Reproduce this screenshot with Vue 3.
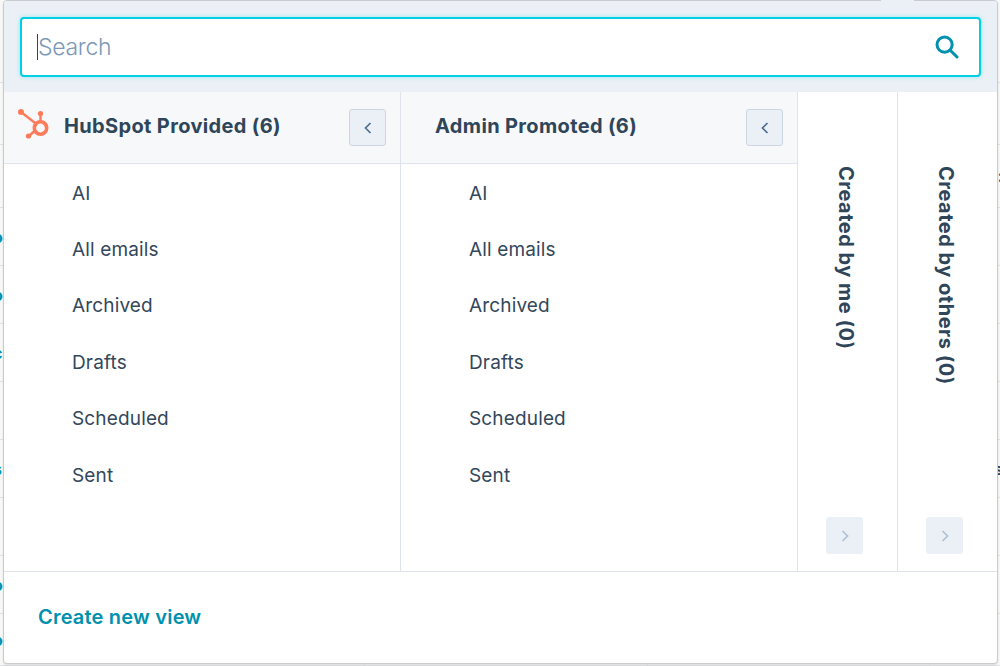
<script setup>
const items = ['AI', 'All emails', 'Archived', 'Drafts', 'Scheduled', 'Sent']
const openCols = [
  { title: 'HubSpot Provided (6)', logo: true },
  { title: 'Admin Promoted (6)', logo: false }
]
const closedCols = ['Created by me (0)', 'Created by others (0)']
const rows = [
  { h: 83, l: '', r: '' },
  { h: 62, l: '', r: '' },
  { h: 63, l: '', r: ':' },
  { h: 58, l: 'o', r: '' },
  { h: 58, l: 'o', r: '' },
  { h: 58, l: 'c', r: '' },
  { h: 58, l: 'l', r: '' },
  { h: 58, l: 's', r: 's' },
  { h: 58, l: 'r', r: '' },
  { h: 58, l: 'o', r: '' },
  { h: 52, l: 'o', r: '' }
]
</script>

<template>
  <div class="page">
    <div class="backdrop">
      <div v-for="(row, i) in rows" :key="i" class="bg-row" :style="{ height: row.h + 'px' }">
        <span class="peek-l">{{ row.l }}</span>
        <span class="peek-r">{{ row.r }}</span>
      </div>
    </div>
    <div class="panel">
      <div class="search-wrap">
        <div class="search">
          <span class="caret"></span>
          <span class="placeholder">Search</span>
          <svg class="search-icon" width="24" height="24" viewBox="0 0 24 24" fill="none">
            <circle cx="9.6" cy="9.6" r="7.6" stroke="#0091ae" stroke-width="3" />
            <path d="M15 15l7 7" stroke="#0091ae" stroke-width="3" stroke-linecap="round" />
          </svg>
        </div>
      </div>
      <div class="columns">
        <div v-for="col in openCols" :key="col.title" class="col">
          <div class="col-head" :class="{ 'has-logo': col.logo }">
            <svg v-if="col.logo" class="logo" width="33" height="33" viewBox="0 0 33 33" fill="none">
              <path d="M4 4L20 16.5" stroke="#ff7a59" stroke-width="2.4" />
              <path d="M23.5 5v9" stroke="#ff7a59" stroke-width="2.4" />
              <path d="M11.5 28.5l7-6.5" stroke="#ff7a59" stroke-width="2.4" />
              <circle cx="4" cy="4" r="3" fill="#ff7a59" />
              <circle cx="23.5" cy="5.5" r="2.6" fill="#ff7a59" />
              <circle cx="11.5" cy="28" r="2.6" fill="#ff7a59" />
              <circle cx="23.5" cy="20" r="6.2" stroke="#ff7a59" stroke-width="3.6" />
            </svg>
            <span class="col-title">{{ col.title }}</span>
            <button class="toggle">
              <svg width="10" height="14" viewBox="0 0 10 14" fill="none">
                <path d="M7.5 2L2.5 7l5 5" stroke="#506e91" stroke-width="1.7" />
              </svg>
            </button>
          </div>
          <ul class="list">
            <li v-for="item in items" :key="item">{{ item }}</li>
          </ul>
        </div>
        <div v-for="name in closedCols" :key="name" class="col-closed">
          <span class="vtitle">{{ name }}</span>
          <button class="toggle disabled">
            <svg width="10" height="14" viewBox="0 0 10 14" fill="none">
              <path d="M2.5 2l5 5-5 5" stroke="#b0c1d4" stroke-width="1.7" />
            </svg>
          </button>
        </div>
      </div>
      <div class="footer"><span class="create">Create new view</span></div>
    </div>
    <div class="notch"></div>
    <div class="under">
      <span class="tick t1"></span>
      <span class="tick t2"></span>
      <span class="tick t3"></span>
    </div>
  </div>
</template>

<style scoped>
.page {
  position: relative;
  width: 1000px;
  height: 666px;
  overflow: hidden;
  background: #f8f8f7;
  font-family: "Inter", "Open Sans", sans-serif;
  color: #33475b;
}
.bg-row {
  box-sizing: border-box;
  border-bottom: 1px solid #dfe1e4;
  display: flex;
  justify-content: space-between;
  align-items: center;
  font-size: 16px;
  font-weight: 700;
}
.peek-l {
  margin-left: -7px;
  color: #0091ae;
}
.peek-r {
  margin-right: -3px;
  color: #33475b;
}
.panel {
  position: absolute;
  left: 3px;
  top: 0;
  width: 995px;
  height: 664px;
  box-sizing: border-box;
  border: 1px solid #c9cbce;
  border-radius: 4px;
  background: #fff;
  display: flex;
  flex-direction: column;
  overflow: hidden;
  box-shadow: 0 1px 2px rgba(0, 0, 0, 0.12);
}
.notch {
  position: absolute;
  left: 881px;
  top: 0;
  width: 33px;
  height: 2px;
  background: #eaf0f6;
}
.under {
  position: absolute;
  left: 0;
  right: 0;
  top: 664px;
  height: 2px;
}
.tick {
  position: absolute;
  top: 0;
  width: 1px;
  height: 2px;
  background: #d4d6d9;
}
.t1 {
  left: 364px;
}
.t2 {
  left: 647px;
}
.t3 {
  left: 929px;
}
.search-wrap {
  height: 91px;
  flex: none;
  box-sizing: border-box;
  background: #eaf0f6;
  padding: 16px 16px 15px;
}
.search {
  height: 60px;
  box-sizing: border-box;
  border: 2px solid #00d0e4;
  border-radius: 4px;
  background: #fff;
  box-shadow: 0 0 4px rgba(0, 208, 228, 0.35);
  display: flex;
  align-items: center;
  padding: 0 20px 0 15px;
}
.caret {
  width: 1px;
  height: 26px;
  background: #33475b;
  flex: none;
}
.placeholder {
  flex: 1;
  font-size: 23px;
  font-weight: 300;
  letter-spacing: -0.3px;
  color: #7c98b6;
}
.search-icon {
  flex: none;
}
.columns {
  flex: 1;
  display: flex;
  min-height: 0;
}
.col {
  width: 397px;
  flex: none;
  box-sizing: border-box;
  border-right: 1px solid #dfe3eb;
  display: flex;
  flex-direction: column;
}
.col-head {
  height: 72px;
  flex: none;
  box-sizing: border-box;
  background: #f6f8fa;
  border-bottom: 1px solid #dfe3eb;
  display: flex;
  align-items: center;
  padding: 0 14px 4px 34px;
  position: relative;
}
.col-head.has-logo {
  padding-left: 60px;
}
.logo {
  position: absolute;
  left: 13px;
  top: 16px;
}
.col-title {
  flex: 1;
  font-size: 20px;
  font-weight: 700;
  letter-spacing: 0.35px;
  color: #2f4559;
}
.toggle {
  width: 37px;
  height: 37px;
  flex: none;
  box-sizing: border-box;
  margin: 0;
  padding: 0;
  border: 1px solid #cbd6e2;
  border-radius: 3px;
  background: #eaf0f6;
  display: flex;
  align-items: center;
  justify-content: center;
}
.col-head .toggle {
  position: relative;
  top: 2px;
}
.toggle.disabled {
  border-color: #eaf0f6;
}
.list {
  list-style: none;
  margin: 0;
  padding: 1px 0 0;
}
.list li {
  height: 56.4px;
  display: flex;
  align-items: center;
  padding-left: 68px;
  font-size: 19px;
  font-weight: 400;
  letter-spacing: 0.15px;
  color: #33475b;
}
.col-closed {
  width: 100px;
  flex: none;
  box-sizing: border-box;
  border-right: 1px solid #dfe3eb;
  display: flex;
  flex-direction: column;
  align-items: center;
  justify-content: space-between;
  padding: 74px 6px 17px 0;
}
.col-closed:last-child {
  border-right: 0;
  width: 99px;
}
.vtitle {
  writing-mode: vertical-rl;
  font-size: 20px;
  font-weight: 700;
  letter-spacing: 0.5px;
  line-height: 24px;
  margin-left: 2px;
  color: #2f4559;
}
.footer {
  height: 92px;
  flex: none;
  box-sizing: border-box;
  border-top: 1px solid #dfe3eb;
  display: flex;
  align-items: center;
  padding: 0 0 2px 34px;
}
.create {
  font-size: 20px;
  font-weight: 600;
  letter-spacing: 0.2px;
  color: #0091ae;
}
</style>
